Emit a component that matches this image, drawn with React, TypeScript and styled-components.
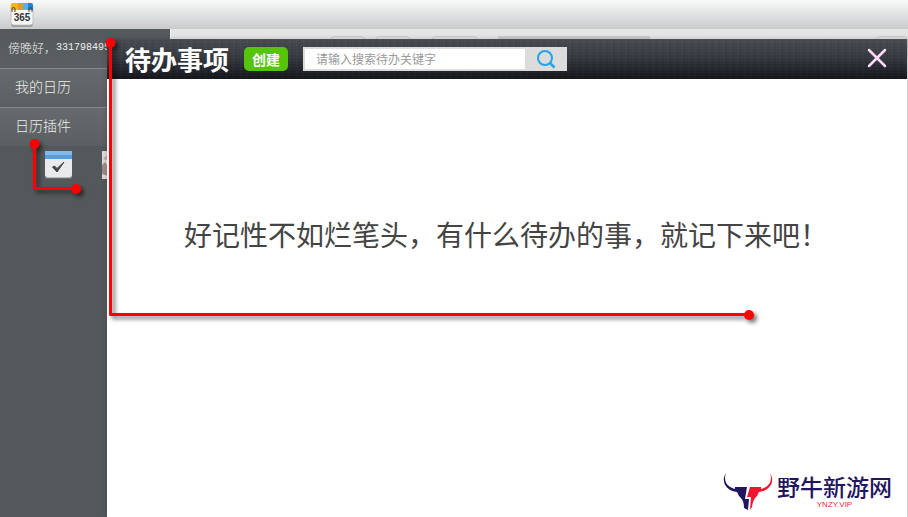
import React from "react";
import styled, { createGlobalStyle } from "styled-components";

const GlobalStyle = createGlobalStyle`
  * { box-sizing: border-box; }
  body {
    margin: 0;
    overflow: hidden;
    background: #e5e5e5;
    font-family: "Noto Sans CJK SC", sans-serif;
  }
  button, input { font-family: inherit; margin: 0; }
`;

const Page = styled.div`
  position: relative;
  display: flex;
  flex-direction: column;
  min-height: 100vh;
`;

const TopBar = styled.header`
  display: flex;
  align-items: center;
  height: 29px;
  padding: 0 9px;
  background: linear-gradient(#f8f9f9, #c9cacb);
`;

const Workspace = styled.div`
  flex: 1;
  display: flex;
`;

const Sidebar = styled.nav`
  width: 170px;
  flex: none;
  color: #eeeeee;
  background: #53595b;
`;

const Greeting = styled.div`
  display: flex;
  align-items: center;
  height: 39px;
  padding: 0 8px 2px;
  font-size: 12px;
  font-weight: 300;
  white-space: nowrap;
  background: linear-gradient(#54595b, #5a5f61);
`;

const Account = styled.span`
  font-family: "Liberation Mono", monospace;
  font-size: 10px;
`;

const MenuLink = styled.a`
  display: flex;
  align-items: center;
  height: 39px;
  padding: 0 15px 4px;
  border-top: 1px solid #85898b;
  color: #eeeeee;
  font-size: 14px;
  font-weight: 300;
  text-decoration: none;
  background: linear-gradient(#666a6c, #5a5f61);
`;

const Plugins = styled.div`
  display: flex;
  gap: 30px;
  padding: 5px 45px;
`;

const PluginButton = styled.button`
  display: flex;
  width: 27px;
  height: 28px;
  padding: 0;
  border: 0;
  background: #666b6d;
`;

const Calendar = styled.main`
  flex: 1;
  display: flex;
  align-items: flex-start;
  gap: 10px;
  padding: 7px 0 0 159px;
  border-left: 1px solid #f3f3f3;
  background: #e5e5e5;
`;

const Tab = styled.div<{ $width: number; $gap?: string; $fill?: string }>`
  width: ${(p) => p.$width}px;
  height: 24px;
  margin-left: ${(p) => p.$gap ?? "0"};
  border: 1px solid #cccccc;
  border-radius: ${(p) => (p.$fill ? "0" : "4px")};
  background: ${(p) => p.$fill ?? "#e3e3e3"};
`;

const Dialog = styled.section`
  position: absolute;
  top: 39px;
  right: 1px;
  bottom: 0;
  left: 107px;
  display: flex;
  flex-direction: column;
  background: #ffffff;
  box-shadow: 0 0 5px rgba(0, 0, 0, 0.2);
`;

const DialogHeader = styled.header`
  display: flex;
  align-items: center;
  height: 40px;
  padding: 0 20px 0 18px;
  background:
    repeating-linear-gradient(90deg, rgba(255, 255, 255, 0.02) 0 1px, transparent 1px 3px, rgba(0, 0, 0, 0.06) 3px 4px, transparent 4px 7px),
    repeating-linear-gradient(rgba(255, 255, 255, 0.02) 0 1px, transparent 1px 3px),
    linear-gradient(#484c52, #32373d 50%, #14151b);
`;

const Title = styled.h1`
  margin: 0 15px 0 0;
  color: #ffffff;
  font-size: 26px;
  line-height: 40px;
  font-weight: 700;
`;

const CreateButton = styled.button`
  width: 44px;
  height: 24px;
  margin-right: 15px;
  padding: 0;
  border: 0;
  border-radius: 5px;
  color: #ffffff;
  background: #55c40b;
  font-size: 14px;
  line-height: 22px;
  font-weight: 700;
`;

const Search = styled.form`
  display: flex;
  width: 264px;
  height: 24px;
  padding: 2px 0 2px 2px;
  background: #dcdcdc;
`;

const SearchInput = styled.input`
  flex: 1;
  min-width: 0;
  height: 20px;
  padding: 0 11px 2px;
  border: 0;
  border-radius: 0;
  background: #ffffff;
  font-size: 12px;
  &::placeholder { color: #999999; opacity: 1; }
`;

const IconButton = styled.button<{ $width: number }>`
  display: flex;
  align-items: center;
  justify-content: center;
  width: ${(p) => p.$width}px;
  height: 20px;
  padding: 0;
  border: 0;
  background: transparent;
`;

const CloseSlot = styled.div`
  margin-left: auto;
  padding-bottom: 2px;
`;

const Empty = styled.p`
  margin: 135px 0 0 77px;
  color: #444444;
  font-size: 28px;
  line-height: 40px;
  font-weight: 400;
  white-space: nowrap;
`;

const Brand = styled.footer`
  display: flex;
  align-items: flex-start;
  align-self: flex-end;
  gap: 4px;
  margin: auto 15px 5px 0;
`;

const BrandText = styled.div`
  display: flex;
  flex-direction: column;
  align-items: center;
`;

const BrandName = styled.strong`
  color: #23145f;
  font-size: 23px;
  line-height: 28px;
  font-weight: 500;
`;

const BrandSite = styled.span`
  color: #ee2944;
  font-family: "Liberation Sans", sans-serif;
  font-size: 8px;
  line-height: 10px;
`;

const Markup = styled.svg`
  position: absolute;
  top: 0;
  left: 0;
  pointer-events: none;
  filter: drop-shadow(3px 3px 2px rgba(0, 0, 0, 0.55));
`;

const AppLogo = () => (
  <svg width="26" height="26" viewBox="0 0 26 26" aria-hidden="true">
    <rect x="2" y="3" width="22" height="22" rx="3" fill="#969899" />
    <rect x="2" y="2" width="22" height="21" rx="3" fill="#fafafa" stroke="#c2c2c2" />
    <path d="M2 8V3a2 2 0 0 1 2-2h5v7z" fill="#f4b321" />
    <path d="M9 1h5v7H9z" fill="#f49222" />
    <path d="M14 1h5v7h-5z" fill="#54b5e8" />
    <path d="M19 1h3a2 2 0 0 1 2 2v5h-5z" fill="#2583cb" />
    <path d="M3 10V7a1.500 1.500 0 0 1 3 0v3M20 10V7a1.500 1.500 0 0 1 3 0v3" fill="none" stroke="#444" />
    <text x="13" y="19" textAnchor="middle" fontFamily="Liberation Sans, sans-serif" fontWeight="700" fontSize="10" fill="#333">365</text>
  </svg>
);

const TodoIcon = () => (
  <svg width="27" height="28" viewBox="0 0 27 28" aria-hidden="true">
    <rect y="1" width="27" height="26" rx="3" fill="#b8babb" />
    <rect width="27" height="26" rx="3" fill="#e9eaeb" />
    <path d="M0 0h27v8H0z" fill="#5a9bd9" />
    <path d="M0 0h27v4H0z" fill="#83b8e8" />
    <path d="M7.500 16l4.500 5 7-10-7 6.500-2.500-2.500z" fill="#454545" stroke="#454545" strokeLinejoin="round" />
  </svg>
);

const PhotoIcon = () => (
  <svg width="27" height="28" viewBox="0 0 27 28" aria-hidden="true">
    <rect width="27" height="28" fill="#ded8d8" />
    <path d="M0 14l3-3 3 5v9l-6-2z" fill="#9c8a8b" />
    <path d="M1 8l4-4v5z" fill="#b6aaa8" />
  </svg>
);

const BullLogo = () => (
  <svg width="50" height="40" viewBox="0 0 50 40" aria-hidden="true">
    <path d="M3 1C0 9 4 15 12 17V15H24L22 27H26L25 38L21 36C21 29 19 27 16 24L14 20C4 19-3 10 3 1Z" fill="#23145f" />
    <path d="M47 1C50 9 46 15 38 17V15H27L24 25H28L27 38L29 35C30 29 31 27 34 24L36 20C46 19 53 10 47 1Z" fill="#ee1731" />
  </svg>
);

export default function App() {
  return (
    <Page>
      <GlobalStyle />
      <TopBar><AppLogo /></TopBar>
      <Workspace>
        <Sidebar>
          <Greeting>傍晚好，<Account>331798495</Account></Greeting>
          <MenuLink href="#calendar">我的日历</MenuLink>
          <MenuLink href="#plugins">日历插件</MenuLink>
          <Plugins>
            <PluginButton aria-label="待办事项"><TodoIcon /></PluginButton>
            <PluginButton aria-label="相册"><PhotoIcon /></PluginButton>
          </Plugins>
        </Sidebar>
        <Calendar>
          <Tab $width={35} />
          <Tab $width={35} />
          <Tab $width={46} $gap="12px" />
          <Tab $width={152} $gap="10px" $fill="#cccccc" />
          <Tab $width={32} $gap="auto" />
        </Calendar>
      </Workspace>
      <Dialog role="dialog" aria-labelledby="todo-title">
        <DialogHeader>
          <Title id="todo-title">待办事项</Title>
          <CreateButton>创建</CreateButton>
          <Search role="search">
            <SearchInput aria-label="搜索待办" placeholder="请输入搜索待办关键字" />
            <IconButton type="button" $width={42} aria-label="搜索">
              <svg width="20" height="20" viewBox="0 0 20 20" fill="none" stroke="#22a5e8" strokeWidth="2">
                <circle cx="9" cy="9" r="7" />
                <path d="M14 14l4.500 4.500" strokeWidth="2.500" />
              </svg>
            </IconButton>
          </Search>
          <CloseSlot>
            <IconButton type="button" $width={20} aria-label="关闭">
              <svg width="20" height="20" viewBox="0 0 20 20" fill="none" stroke="#ffd9fa" strokeWidth="2.500" strokeLinecap="round">
                <path d="M2 2l16 16M18 2L2 18" />
              </svg>
            </IconButton>
          </CloseSlot>
        </DialogHeader>
        <Empty>好记性不如烂笔头，有什么待办的事，就记下来吧！</Empty>
        <Brand>
          <BullLogo />
          <BrandText>
            <BrandName>野牛新游网</BrandName>
            <BrandSite>YNZY.VIP</BrandSite>
          </BrandText>
        </Brand>
      </Dialog>
      <Markup width="770" height="330" viewBox="0 0 770 330" aria-hidden="true">
        <g fill="none" stroke="#ff0000" strokeWidth="3" strokeLinejoin="round">
          <path d="M110.500 43V314.500H749" />
          <path d="M34.500 144V188.500H76" />
        </g>
        <g fill="#ff0000">
          <circle cx="110.500" cy="43" r="5" />
          <circle cx="749" cy="315" r="5" />
          <circle cx="34.500" cy="144" r="5" />
          <circle cx="76" cy="189" r="5" />
        </g>
      </Markup>
    </Page>
  );
}
